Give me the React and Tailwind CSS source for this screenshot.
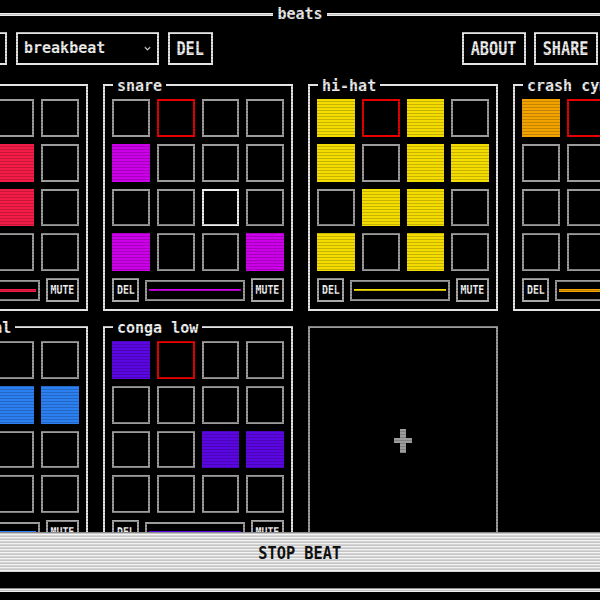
import React from "react";

const TRACKS_ROW1 = [
  { name: "kick", color: "bg-[#f41c46]", line: "bg-[#f41c46]", lineH: "h-[3px]", on: [0, 6, 8, 10] },
  { name: "snare", color: "bg-[#cc00e8]", line: "bg-[#cc00e8]", lineH: "h-[2px]", on: [4, 12, 15], hover: 10 },
  { name: "hi-hat", color: "bg-[#f4dc00]", line: "bg-[#f4dc00]", lineH: "h-[2px]", on: [0, 2, 4, 6, 7, 9, 10, 12, 14] },
  { name: "crash cymbal", color: "bg-[#f2a200]", line: "bg-[#f2a200]", lineH: "h-[3px]", on: [0, 11] },
];

const TRACKS_ROW2 = [
  { name: "ride cymbal", color: "bg-[#2b7ff0]", line: "bg-[#2b7ff0]", lineH: "h-[2px]", on: [5, 6, 7] },
  { name: "conga low", color: "bg-[#5a06e0]", line: "bg-[#5a06e0]", lineH: "h-[2px]", on: [0, 10, 11] },
];

const STEP = 1;

function Pad({ active, color, current, hover }) {
  let cls = "aspect-square border-2 ";
  if (active) cls += color + " border-transparent";
  else if (current) cls += "border-[#e80000]";
  else if (hover) cls += "border-[#eeeeee]";
  else cls += "border-[#9c9c9c]";
  return <div className={cls} />;
}

function SmallBtn({ children, className }) {
  return (
    <div className={"h-[24px] border-2 border-[#a8a8a8] flex items-center justify-center shrink-0 " + className}>
      <span className="inline-block scale-x-[0.82] text-[12px] font-bold leading-none text-[#eeeeee]">{children}</span>
    </div>
  );
}

function Card({ t }) {
  return (
    <div className="relative shrink-0 w-[190px] border-2 border-[#e4e4e4] px-[7px] pt-[13px] pb-[7px]">
      <span className="absolute left-[8px] top-[-9px] bg-black px-[4px] text-[15px] font-bold leading-[18px] whitespace-nowrap text-[#eeeeee]">
        {t.name}
      </span>
      <div className="grid grid-cols-4 gap-[7px]">
        {Array.from({ length: 16 }).map((_, i) => (
          <Pad
            key={i}
            active={t.on.includes(i)}
            color={t.color}
            current={i === STEP}
            hover={t.hover === i}
          />
        ))}
      </div>
      <div className="mt-[7px] flex items-center h-[24px]">
        <SmallBtn className="w-[27px]">DEL</SmallBtn>
        <div className="flex-1 mx-[6px] h-[21px] border-2 border-[#9c9c9c] flex items-center px-[2px]">
          <div className={"w-full " + t.lineH + " " + t.line} />
        </div>
        <SmallBtn className="w-[33px]">MUTE</SmallBtn>
      </div>
    </div>
  );
}

function AddCard() {
  return (
    <div className="shrink-0 w-[190px] h-[227px] border-2 border-[#9c9c9c] flex items-center justify-center">
      <svg width="18" height="24" viewBox="0 0 18 24" className="mt-[3px]">
        <rect x="0" y="9" width="18" height="5" fill="#9c9c9c" />
        <rect x="6" y="0" width="6" height="24" fill="#9c9c9c" />
      </svg>
    </div>
  );
}

function TopBtn({ children, className }) {
  return (
    <div className={"h-[33px] border-2 border-[#e4e4e4] flex items-center justify-center shrink-0 " + className}>
      <span className="inline-block scale-x-[0.8] text-[19px] font-bold leading-none text-[#eeeeee]">{children}</span>
    </div>
  );
}

export default function App() {
  return (
    <div className="relative w-[600px] h-[600px] overflow-hidden bg-black text-[#eeeeee] [font-family:'DejaVu_Sans_Mono',monospace] flex flex-col">
      <header className="h-[28px] flex items-center shrink-0">
        <div className="flex-1 h-[3px] bg-[#eeeeee]" />
        <span className="px-[4px] text-[15px] leading-none font-bold">beats</span>
        <div className="flex-1 h-[3px] bg-[#eeeeee]" />
      </header>

      <div className="mt-[4px] h-[33px] flex justify-between shrink-0 pr-[2px]">
        <div className="flex gap-[9px] ml-[-38px]">
          <TopBtn className="w-[45px]">NEW</TopBtn>
          <div className="w-[143px] h-[33px] border-2 border-[#e4e4e4] flex items-center justify-between pl-[6px] pr-[6px]">
            <span className="text-[15px] font-bold leading-none">breakbeat</span>
            <svg width="7" height="5" viewBox="0 0 7 5">
              <path d="M0.8 1 L3.5 3.8 L6.2 1" stroke="#cccccc" strokeWidth="1.2" fill="none" />
            </svg>
          </div>
          <TopBtn className="w-[45px]">DEL</TopBtn>
        </div>
        <div className="flex gap-[8px]">
          <TopBtn className="w-[64px]">ABOUT</TopBtn>
          <TopBtn className="w-[64px]">SHARE</TopBtn>
        </div>
      </div>

      <div className="flex-1 min-h-0 overflow-hidden pt-[19px] flex flex-col gap-[15px]">
        <div className="flex gap-[15px] ml-[-102px]">
          {TRACKS_ROW1.map((t) => (
            <Card key={t.name} t={t} />
          ))}
        </div>
        <div className="flex gap-[15px] ml-[-102px]">
          {TRACKS_ROW2.map((t) => (
            <Card key={t.name} t={t} />
          ))}
          <AddCard />
        </div>
      </div>

      <div className="h-[40px] shrink-0 border-t border-[#8a8a8a] bg-[repeating-linear-gradient(to_bottom,#f3f3f3_0px,#f3f3f3_2px,#d4d4d4_2px,#d4d4d4_3px)] flex items-center justify-center">
        <span className="inline-block scale-x-[0.85] text-[18px] font-bold leading-none text-[#111111]">STOP BEAT</span>
      </div>
      <div className="mt-[16px] h-[4px] shrink-0 border-t border-[#8a8a8a] bg-[#eeeeee]" />
      <div className="h-[8px] shrink-0" />

      <div className="pointer-events-none absolute inset-0 bg-[repeating-linear-gradient(to_bottom,transparent_0px,transparent_2px,#00000030_2px,#00000030_3px)]" />
    </div>
  );
}
